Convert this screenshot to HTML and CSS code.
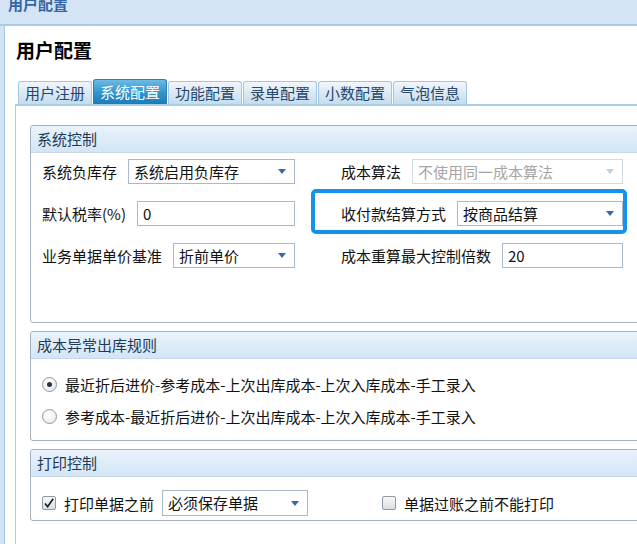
FILE: index.html
```html
<!DOCTYPE html>
<html lang="zh-CN">
<head>
    <meta charset="UTF-8">
    <meta name="viewport" content="width=device-width, initial-scale=1.0">
    <title>用户配置</title>
    <link rel="stylesheet" href="styles.css">
</head>
<body>
    <div class="topbar"><span class="topbar-title">用户配置</span></div>
    <div class="frame">
        <div class="window">
            <h1 class="page-title">用户配置</h1>
            <div class="tabs">
                <div class="tab">用户注册</div>
                <div class="tab active">系统配置</div>
                <div class="tab">功能配置</div>
                <div class="tab">录单配置</div>
                <div class="tab">小数配置</div>
                <div class="tab">气泡信息</div>
            </div>
            <div class="tab-panel">
                <!-- 系统控制 -->
                <div class="group">
                    <div class="group-head">系统控制</div>
                    <div class="group-body body-system">
                        <div class="form-row">
                            <div class="field field-left">
                                <span class="label">系统负库存</span>
                                <div class="select"><span class="value">系统启用负库存</span><span class="arrow"></span></div>
                            </div>
                            <div class="field field-right">
                                <span class="label">成本算法</span>
                                <div class="select disabled"><span class="value">不使用同一成本算法</span><span class="arrow"></span></div>
                            </div>
                        </div>
                        <div class="form-row">
                            <div class="field field-left">
                                <span class="label">默认税率(%)</span>
                                <div class="input">0</div>
                            </div>
                            <div class="field field-right highlight">
                                <span class="label">收付款结算方式</span>
                                <div class="select"><span class="value">按商品结算</span><span class="arrow"></span></div>
                            </div>
                        </div>
                        <div class="form-row">
                            <div class="field field-left">
                                <span class="label">业务单据单价基准</span>
                                <div class="select"><span class="value">折前单价</span><span class="arrow"></span></div>
                            </div>
                            <div class="field field-right">
                                <span class="label">成本重算最大控制倍数</span>
                                <div class="input">20</div>
                            </div>
                        </div>
                    </div>
                </div>

                <!-- 成本异常出库规则 -->
                <div class="group">
                    <div class="group-head">成本异常出库规则</div>
                    <div class="group-body body-rules">
                        <div class="radio-row"><span class="radio checked"><span class="dot"></span></span>最近折后进价-参考成本-上次出库成本-上次入库成本-手工录入</div>
                        <div class="radio-row"><span class="radio"></span>参考成本-最近折后进价-上次出库成本-上次入库成本-手工录入</div>
                    </div>
                </div>

                <!-- 打印控制 -->
                <div class="group">
                    <div class="group-head">打印控制</div>
                    <div class="group-body body-print">
                        <div class="print-row">
                            <div class="check-item">
                                <span class="checkbox checked">
                                    <svg width="12" height="12" viewBox="0 0 12 12"><path d="M2 6.5 L4.6 9.6 L10.2 1.8" fill="none" stroke="#1a1a1a" stroke-width="1.6"/></svg>
                                </span>
                                <span>打印单据之前</span>
                                <div class="select print-select"><span class="value">必须保存单据</span><span class="arrow"></span></div>
                            </div>
                            <div class="check-item">
                                <span class="checkbox"></span>
                                <span>单据过账之前不能打印</span>
                            </div>
                        </div>
                    </div>
                </div>
            </div>
        </div>
    </div>
</body>
</html>
```

FILE: styles.css
```css
body, html {
    height: 100%;
    margin: 0;
    overflow: hidden;
    background-color: #fff;
    font-family: "Noto Sans CJK SC", "Liberation Sans", sans-serif;
    font-size: 15px;
    color: #111;
}
.topbar {
    height: 24px;
    background-color: #d3e5f5;
    border-bottom: 2px solid #a9cbe4;
    overflow: hidden;
    padding-left: 8px;
}
.topbar-title {
    display: block;
    margin-top: -4px;
    font-size: 15px;
    line-height: 16px;
    font-weight: bold;
    color: #3565a6;
}
.frame {
    border-left: 4px solid #d3e5f5;
    height: 518px;
    overflow: hidden;
}
.window {
    height: 100%;
    box-sizing: border-box;
    border-left: 1px solid #a6c8e4;
    padding-left: 10px;
    display: flex;
    flex-direction: column;
}
.page-title {
    margin: 0 0 0 1px;
    padding-top: 12px;
    font-size: 19px;
    line-height: 24px;
    font-weight: bold;
    color: #000;
}
.tabs {
    display: flex;
    align-items: flex-end;
    margin-top: 17px;
    padding-left: 3px;
}
.tab {
    height: 22px;
    line-height: 22px;
    padding: 0 6px;
    margin-right: 1px;
    border: 1px solid #a3c6de;
    border-bottom: none;
    border-radius: 3px 3px 0 0;
    background: linear-gradient(#f0f6fb, #dbe9f5 50%, #c5dcee);
    color: #27476a;
    white-space: nowrap;
}
.tab.active {
    height: 24px;
    line-height: 24px;
    border-color: #2a7fb4;
    background: linear-gradient(#6cbbe3, #3496cf 50%, #1b7bb9);
    color: #fff;
}
.tab-panel {
    flex: 1;
    min-height: 0;
    overflow: hidden;
    border-top: 2px solid #a8d0e6;
    border-left: 1px solid #a8d0e6;
    padding: 19px 0 0 14px;
}
.group {
    width: 640px;
    border: 1px solid #a5b1bd;
    border-radius: 3px;
    margin-bottom: 8px;
}
.group-head {
    height: 26px;
    line-height: 26px;
    padding-left: 6px;
    border-bottom: 1px solid #c6d8e9;
    border-radius: 3px 3px 0 0;
    background: linear-gradient(#e9f3fc, #d2e5f6);
    color: #1f3a57;
}
.group-body {
    padding-left: 11px;
}
.body-system {
    padding-top: 6px;
    padding-bottom: 54px;
    display: flex;
    flex-direction: column;
    gap: 17px;
}
.form-row {
    display: flex;
    height: 25px;
}
.field {
    display: flex;
    align-items: center;
    gap: 11px;
    position: relative;
}
.field-left {
    width: 253px;
}
.field-right {
    width: 282px;
    margin-left: 46px;
}
.label {
    white-space: nowrap;
}
.select, .input {
    flex: 1;
    box-sizing: border-box;
    height: 25px;
    border: 1px solid #a7b9cb;
    background-color: #fff;
    padding-left: 5px;
    line-height: 23px;
    white-space: nowrap;
}
.select {
    display: flex;
    align-items: center;
}
.select .value {
    flex: 1;
}
.arrow {
    width: 0;
    height: 0;
    margin-right: 8px;
    border-left: 4px solid transparent;
    border-right: 4px solid transparent;
    border-top: 5px solid #3a6aa6;
}
.select.disabled {
    border-color: #d2dae1;
    color: #a6a6a6;
}
.select.disabled .arrow {
    border-top-color: #c6ced6;
}
.highlight::after {
    content: '';
    position: absolute;
    left: -30px;
    right: -4px;
    top: -12px;
    bottom: -8px;
    border: 4px solid #1592ea;
    border-radius: 5px;
    pointer-events: none;
}
.body-rules {
    padding-top: 15px;
    padding-bottom: 14px;
    display: flex;
    flex-direction: column;
    gap: 12px;
}
.radio-row {
    display: flex;
    align-items: center;
    gap: 8px;
    height: 20px;
    white-space: nowrap;
}
.radio {
    box-sizing: border-box;
    width: 15px;
    height: 15px;
    border: 1px solid #8d99a5;
    border-radius: 50%;
    background: radial-gradient(circle at 40% 35%, #fff, #e2e6ea);
    display: flex;
    align-items: center;
    justify-content: center;
}
.radio .dot {
    width: 5px;
    height: 5px;
    border-radius: 50%;
    background-color: #2a3440;
}
.body-print {
    padding-top: 13px;
    padding-bottom: 4px;
}
.print-row {
    display: flex;
    align-items: center;
    gap: 74px;
    height: 26px;
}
.check-item {
    display: flex;
    align-items: center;
    gap: 8px;
    white-space: nowrap;
}
.checkbox {
    box-sizing: border-box;
    width: 14px;
    height: 14px;
    border: 1px solid #8d99a5;
    border-radius: 2px;
    background: linear-gradient(#f7f7f7, #dcdfe2);
    display: flex;
    align-items: center;
    justify-content: center;
}
.print-select {
    flex: none;
    width: 146px;
    height: 26px;
    line-height: 24px;
}
```
